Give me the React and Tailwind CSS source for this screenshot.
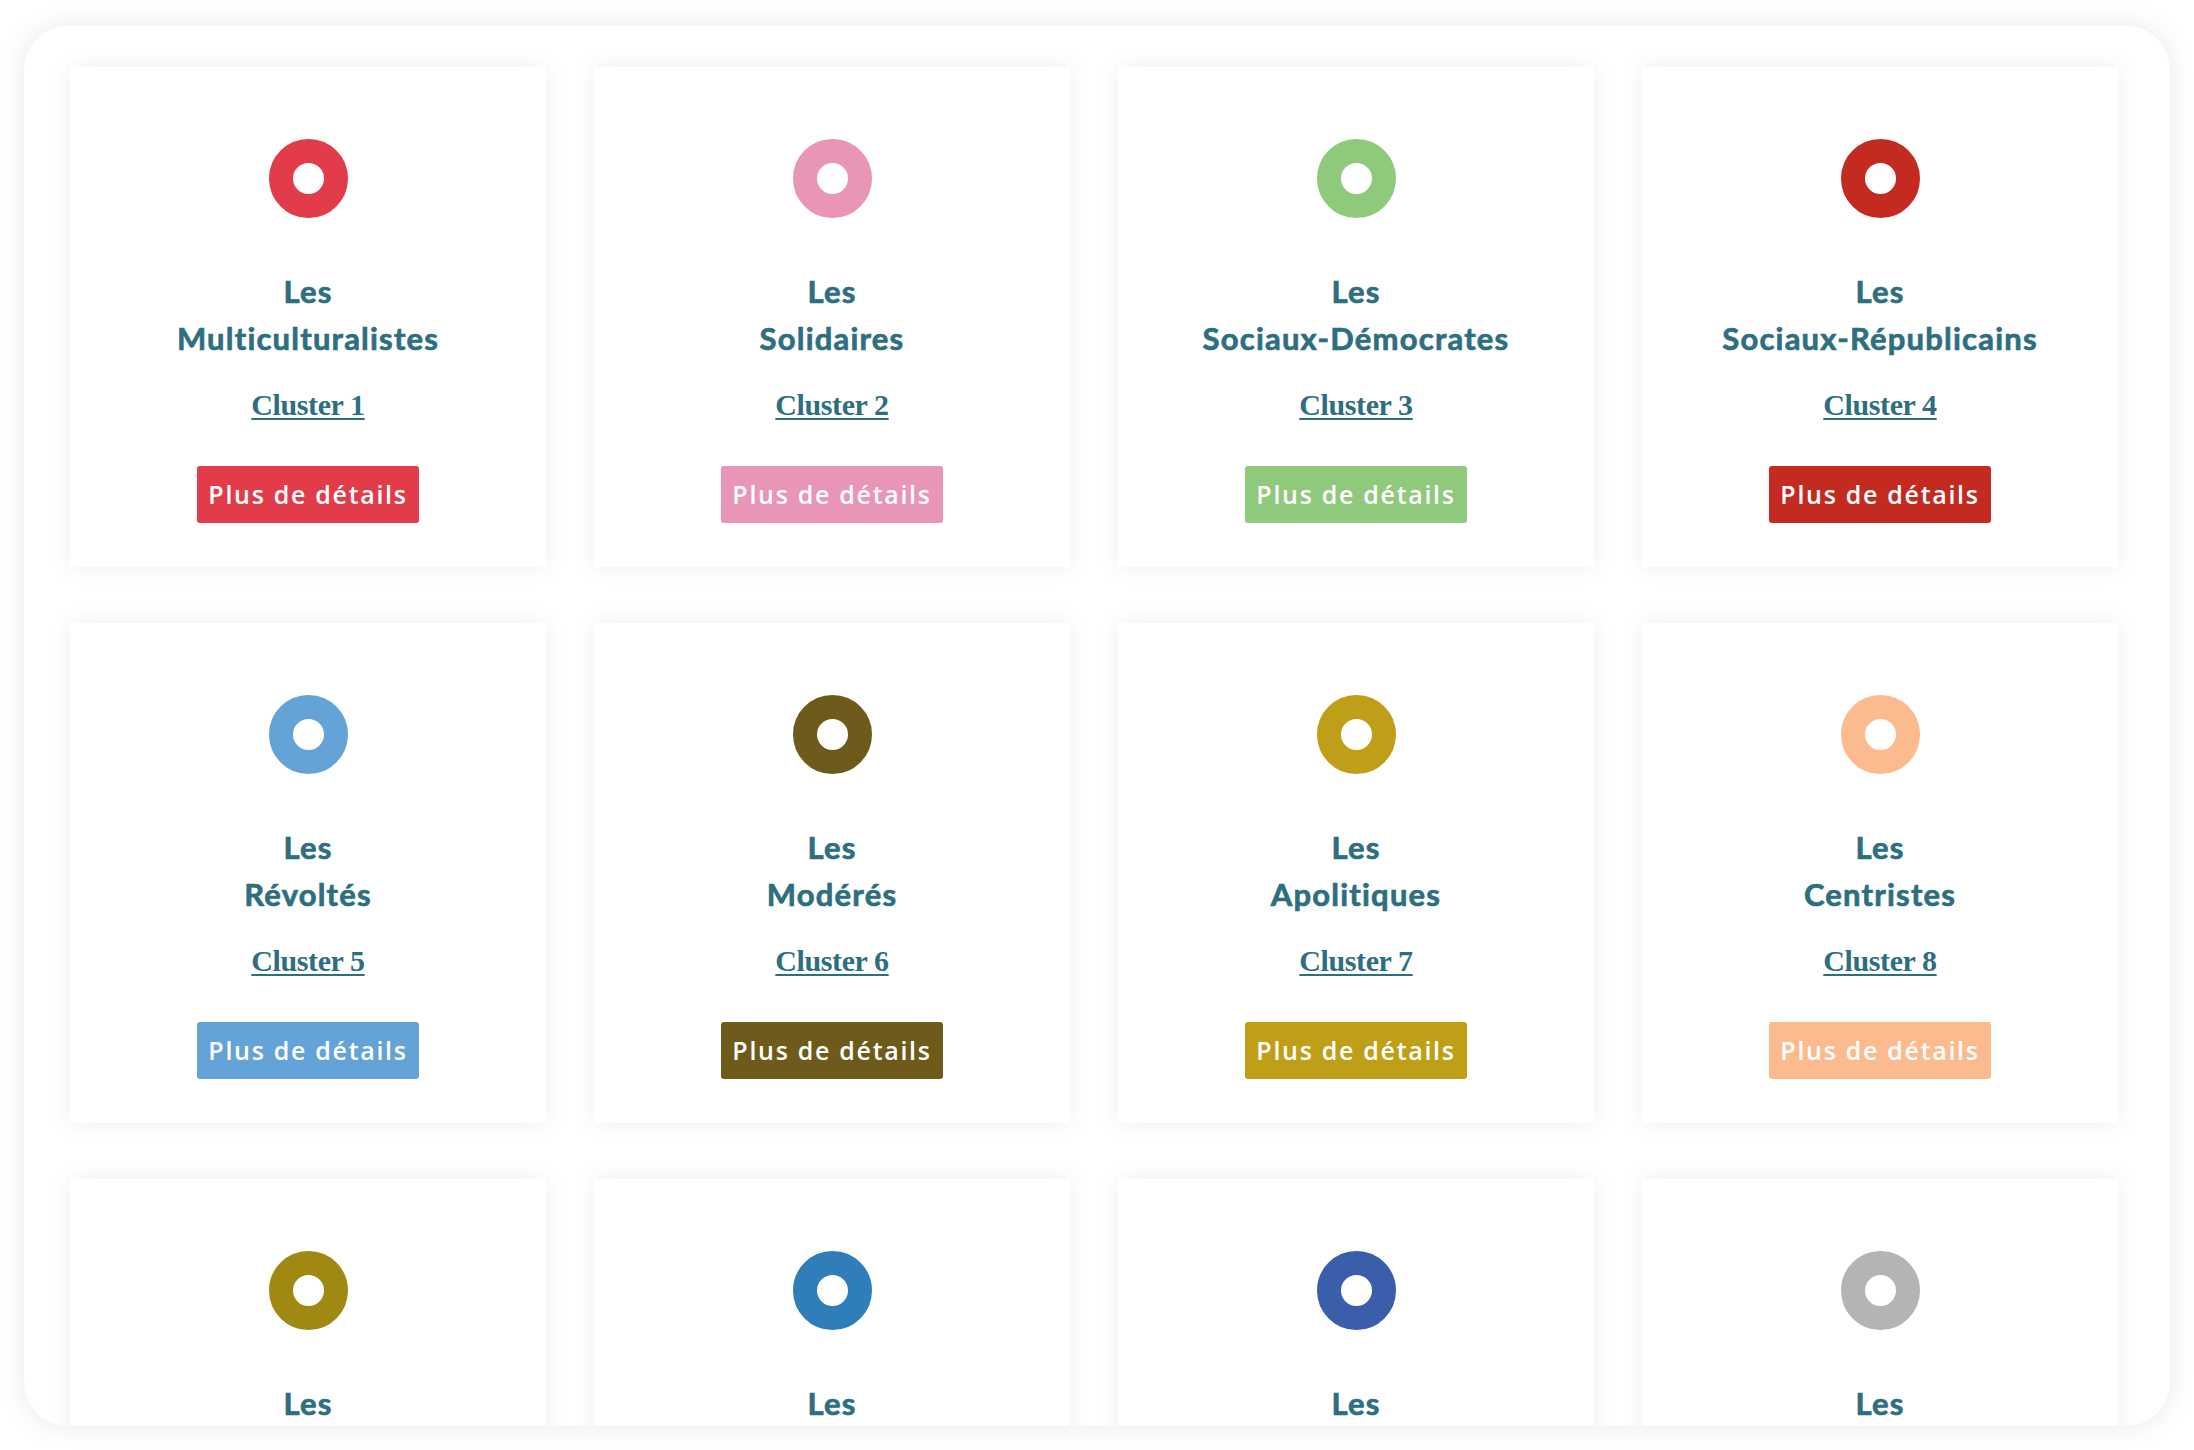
const clusters = [
  { id: 1, name: "Multiculturalistes", ring: "border-[#e23c4a]", btn: "bg-[#e23c4a]" },
  { id: 2, name: "Solidaires", ring: "border-[#e995b5]", btn: "bg-[#e995b5]" },
  { id: 3, name: "Sociaux-Démocrates", ring: "border-[#8fc97c]", btn: "bg-[#8fc97c]" },
  { id: 4, name: "Sociaux-Républicains", ring: "border-[#c42b20]", btn: "bg-[#c42b20]" },
  { id: 5, name: "Révoltés", ring: "border-[#64a3d8]", btn: "bg-[#64a3d8]" },
  { id: 6, name: "Modérés", ring: "border-[#6e5a1a]", btn: "bg-[#6e5a1a]" },
  { id: 7, name: "Apolitiques", ring: "border-[#c09f18]", btn: "bg-[#c09f18]" },
  { id: 8, name: "Centristes", ring: "border-[#fcbb8e]", btn: "bg-[#fcbb8e]" },
  { id: 9, name: "Conservateurs", ring: "border-[#a08913]", btn: "bg-[#a08913]" },
  { id: 10, name: "Libéraux", ring: "border-[#2f7db9]", btn: "bg-[#2f7db9]" },
  { id: 11, name: "Identitaires", ring: "border-[#3a5ea9]", btn: "bg-[#3a5ea9]" },
  { id: 12, name: "Indécis", ring: "border-[#b4b4b4]", btn: "bg-[#b4b4b4]" },
];

function ClusterCard({ c }) {
  return (
    <div className="h-[500px] bg-white shadow-[0_0_22px_rgba(0,0,0,0.07)] flex flex-col items-center pt-[72px]">
      <div className={`w-[79px] h-[79px] rounded-full border-[24px] bg-white ${c.ring}`} />
      <div className="mt-[50px] text-center font-['Lato',sans-serif] font-bold text-[31px] leading-[47px] tracking-[1.2px] text-[#2d6f7f] [-webkit-text-stroke:0.7px_#2d6f7f]">
        <div>Les</div>
        <div>{c.name}</div>
      </div>
      <a
        href="#"
        className="mt-[25px] font-['Liberation_Serif',serif] font-bold text-[30px] leading-[36px] tracking-[-0.4px] text-[#2d6f7f] underline decoration-[2px] underline-offset-[3px]"
      >
        Cluster {c.id}
      </a>
      <button
        className={`mt-[43px] h-[57px] px-[11px] rounded-[3px] flex items-center font-['Open_Sans',sans-serif] font-semibold text-[25px] tracking-[1.7px] text-white ${c.btn}`}
      >
        Plus de détails
      </button>
    </div>
  );
}

export default function App() {
  return (
    <div className="w-full h-[1450px] bg-white pt-[26px] pl-[24px]">
      <div className="w-[2146px] h-[1400px] rounded-[44px] overflow-hidden bg-white shadow-[0_0_28px_rgba(0,0,0,0.09)] pl-[46px] pt-[41px]">
        <div className="grid grid-cols-[repeat(4,476px)] gap-x-[48px] gap-y-[56px]">
          {clusters.map((c) => (
            <ClusterCard key={c.id} c={c} />
          ))}
        </div>
      </div>
    </div>
  );
}
